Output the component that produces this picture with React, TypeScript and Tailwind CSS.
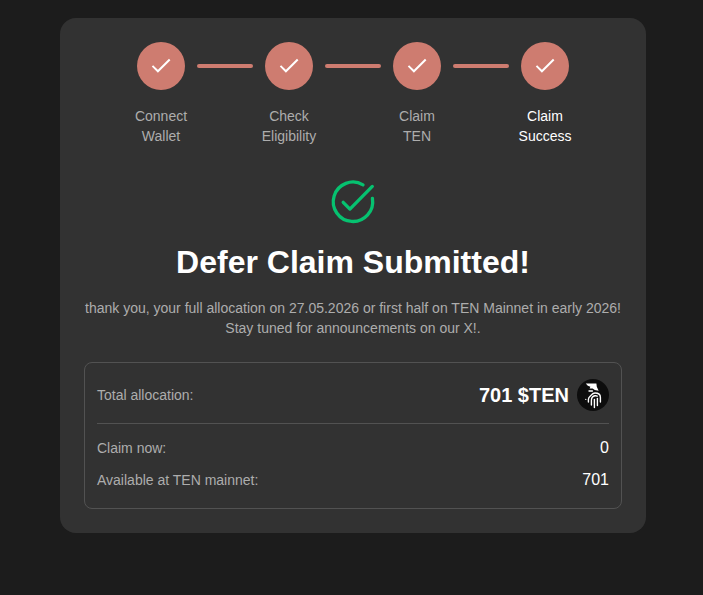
const STEPS = [
  ['Connect', 'Wallet'],
  ['Check', 'Eligibility'],
  ['Claim', 'TEN'],
  ['Claim', 'Success'],
];

function CheckIcon() {
  return (
    <svg
      viewBox="0 0 24 24"
      className="size-6"
      fill="none"
      stroke="currentColor"
      strokeWidth="2"
      strokeLinecap="square"
      aria-hidden="true"
    >
      <path d="M4.2 12.6 8.9 17.3 20 6.2" />
    </svg>
  );
}

function Stepper({ current }: { current: number }) {
  return (
    <ol className="flex justify-center">
      {STEPS.map(([top, bottom], i) => (
        <li key={bottom} className="flex">
          {i > 0 && <span className="mx-3 mt-[22px] h-1 w-14 rounded-full bg-[#ce7c70]" />}
          <div className="flex w-12 flex-col items-center">
            <span className="flex size-12 items-center justify-center rounded-full bg-[#ce7c70] text-white">
              <CheckIcon />
            </span>
            <span
              className={
                i === current
                  ? 'mt-4 text-center text-sm leading-5 text-white'
                  : 'mt-4 text-center text-sm leading-5 text-[#adadad]'
              }
            >
              {top}
              <br />
              {bottom}
            </span>
          </div>
        </li>
      ))}
    </ol>
  );
}

function SuccessIcon() {
  return (
    <svg
      viewBox="0 0 48 48"
      className="size-12"
      fill="none"
      stroke="#06c270"
      strokeWidth="3.3"
      strokeLinecap="round"
      strokeLinejoin="round"
      aria-hidden="true"
    >
      <path d="M43.4 20.4A19.7 19.7 0 1 1 34 6.8" />
      <path d="M14.2 24.3 20.9 31.1 43.3 8.4" />
    </svg>
  );
}

function TenLogo() {
  return (
    <svg viewBox="0 0 32 32" className="size-8" aria-hidden="true">
      <circle cx="16" cy="16" r="16" fill="#0d0d0d" />
      <path d="M8.8 4.6h10.6l.4 3.2 1.8 4-3.8-.8-2.2-1.4-3-.2.8-1.6-2.6-1z" fill="#fff" />
      <g fill="none" stroke="#fff" strokeWidth="1.4" strokeLinecap="round">
        <path d="M12 12h3.4" />
        <path d="M11.4 23v-2.6c0-2 1-2.6 2-3.4 1.4-1 1.6-3 4.6-3 3.4 0 5.4 1.6 5.4 4.4V23" />
        <path d="M14.4 26v-4.6c0-2.6 1.4-4.2 3.6-4.6.8-.1 1.6 0 2.2.4" />
        <path d="M17.4 28.6v-8.2" />
        <path d="M20.4 26.6v-7.2" />
      </g>
      <circle cx="8.8" cy="20.4" r=".6" fill="#fff" />
    </svg>
  );
}

function AllocationRow({ label, value }: { label: string; value: number }) {
  return (
    <div className="flex items-center justify-between">
      <dt className="text-sm text-[#adadad]">{label}</dt>
      <dd className="text-base text-white">{value}</dd>
    </div>
  );
}

export default function App() {
  return (
    <div className="min-h-screen bg-[#1c1c1c] pt-[18px] pr-[57px] pb-[62px] pl-[60px] font-['Liberation_Sans',Arial,sans-serif]">
      <main className="rounded-2xl bg-[#323232] p-6">
        <Stepper current={3} />

        <div className="mt-8 flex flex-col items-center text-center">
          <SuccessIcon />
          <h1 className="mt-4 text-[32px] leading-10 font-bold text-white">Defer Claim Submitted!</h1>
          <p className="mt-4 text-sm leading-5 text-[#adadad]">
            thank you, your full allocation on 27.05.2026 or first half on TEN Mainnet in early 2026!
            <br />
            Stay tuned for announcements on our X!.
          </p>
        </div>

        <dl className="mt-6 rounded-lg border border-[#525252] px-3 py-4">
          <div className="flex items-center justify-between border-b border-[#525252] pb-3">
            <dt className="text-sm text-[#adadad]">Total allocation:</dt>
            <dd className="flex items-center gap-2 text-xl font-bold text-white">
              701 $TEN
              <TenLogo />
            </dd>
          </div>
          <div className="mt-3 flex flex-col gap-2">
            <AllocationRow label="Claim now:" value={0} />
            <AllocationRow label="Available at TEN mainnet:" value={701} />
          </div>
        </dl>
      </main>
    </div>
  );
}
